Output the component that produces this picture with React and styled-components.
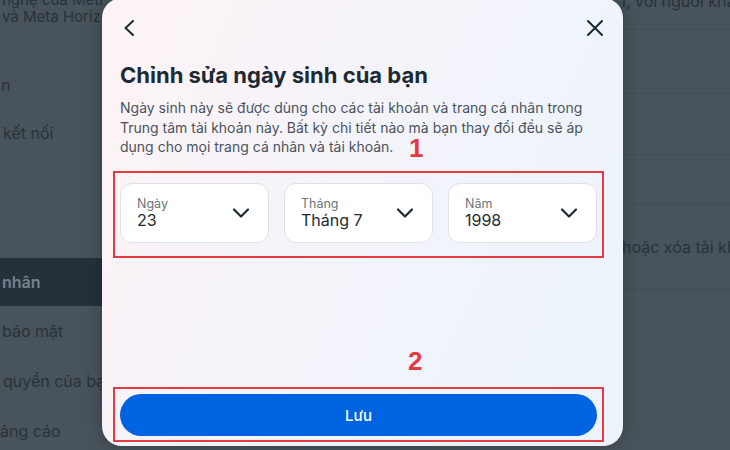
import React from 'react';
import styled, { createGlobalStyle } from 'styled-components';

const Global = createGlobalStyle`
  html, body { margin: 0; padding: 0; }
  body {
    width: 730px;
    height: 450px;
    overflow: hidden;
    font-family: Inter, "Noto Sans", sans-serif;
  }
`;

const Page = styled.div`
  position: relative;
  width: 730px;
  height: 450px;
  overflow: hidden;
  background: #48535b;
  display: grid;
  grid-template-columns: 102px 521px 1fr;
`;

const Sidebar = styled.div`
  display: flex;
  flex-direction: column;
  overflow: hidden;
  white-space: nowrap;
  color: #27323a;
  font-size: 16px;
`;

const IntroText = styled.div`
  margin-top: -9px;
  padding-left: 2px;
  font-size: 15px;
  line-height: 17px;
`;

const NavGroup = styled.div`
  display: flex;
  flex-direction: column;
  margin-top: ${p => p.$top}px;
`;

const NavItem = styled.div`
  height: ${p => p.$h}px;
  display: flex;
  align-items: center;
  padding-left: ${p => p.$indent || 2}px;
  background: ${p => (p.$active ? '#24313b' : 'transparent')};
  color: ${p => (p.$active ? '#76828a' : 'inherit')};
  font-weight: ${p => (p.$active ? 600 : 400)};
`;

const Aside = styled.div`
  display: flex;
  flex-direction: column;
  overflow: hidden;
  white-space: nowrap;
  color: #27323a;
  font-size: 16px;
`;

const AsideRow = styled.div`
  height: ${p => p.$h}px;
  flex: none;
  border-bottom: 1px solid #424d55;
  display: flex;
  align-items: ${p => p.$align || 'center'};
`;

const AsideText = styled.span`
  margin-top: ${p => p.$mt || 0}px;
  margin-left: -1px;
`;

const Modal = styled.div`
  position: absolute;
  left: 102px;
  top: -2px;
  width: 521px;
  height: 448px;
  box-sizing: border-box;
  padding: 14px 26px 4px 18px;
  border-radius: 20px;
  background: linear-gradient(115deg, #fdf3f5 0%, #f6f3f9 35%, #eff4fb 70%, #edf3fb 100%);
  box-shadow: 0 0 18px rgba(0, 0, 0, 0.25);
  display: flex;
  flex-direction: column;
  color: #1c2b33;
`;

const Header = styled.div`
  height: 32px;
  display: flex;
  align-items: center;
  justify-content: space-between;
`;

const IconButton = styled.button`
  border: none;
  background: none;
  padding: 0;
  display: flex;
  align-items: center;
  margin: ${p => p.$margin || 0};
  color: #1c2b33;
`;

const Title = styled.h1`
  margin: 17px 0 0;
  font-size: 22px;
  line-height: 28px;
  font-weight: 700;
  color: #1c2b33;
`;

const Description = styled.p`
  margin: 9px 0 0;
  font-size: 14px;
  line-height: 19.5px;
  color: #4a535c;
`;

const Highlight = styled.div`
  border: 2px solid #e53a3f;
  margin: ${p => p.$margin};
  padding: ${p => p.$padding};
`;

const SelectRow = styled.div`
  display: grid;
  grid-template-columns: repeat(3, 1fr);
  gap: 15px;
`;

const SelectBox = styled.div`
  height: 60px;
  box-sizing: border-box;
  border: 1px solid #dde2e8;
  border-radius: 12px;
  background: #fff;
  display: flex;
  align-items: center;
  justify-content: space-between;
  padding: 0 19px 0 16px;
`;

const SelectText = styled.div`
  display: flex;
  flex-direction: column;
`;

const SelectLabel = styled.span`
  font-size: 12.5px;
  line-height: 15px;
  color: #6b737a;
`;

const SelectValue = styled.span`
  font-size: 16px;
  line-height: 19px;
  color: #1c2b33;
`;

const Spacer = styled.div`
  flex: 1;
`;

const SaveButton = styled.button`
  width: 100%;
  height: 42px;
  border: none;
  border-radius: 21px;
  background: #0064e0;
  color: #fff;
  font-family: inherit;
  font-size: 15px;
  font-weight: 500;
  cursor: pointer;
`;

const Marker = styled.span`
  position: absolute;
  left: ${p => p.$x}px;
  top: ${p => p.$y}px;
  font-family: "Liberation Sans", Arial, sans-serif;
  font-weight: 700;
  font-size: 26px;
  line-height: 1;
  color: #e53a3f;
`;

const Chevron = () => (
  <svg width="16" height="10" viewBox="0 0 16 10" fill="none">
    <path d="M1 1.5 L8 8.5 L15 1.5" stroke="#1c2b33" strokeWidth="2.2" strokeLinecap="round" strokeLinejoin="round" />
  </svg>
);

const Select = ({ label, value }) => (
  <SelectBox>
    <SelectText>
      <SelectLabel>{label}</SelectLabel>
      <SelectValue>{value}</SelectValue>
    </SelectText>
    <Chevron />
  </SelectBox>
);

export default function App() {
  return (
    <>
      <Global />
      <Page>
        <Sidebar>
          <IntroText>
            nghệ của Meta<br />và Meta Horizon
          </IntroText>
          <NavGroup $top={36}>
            <NavItem $h={48} $indent={1}>n</NavItem>
            <NavItem $h={48} $indent={3}>kết nối</NavItem>
          </NavGroup>
          <NavGroup $top={101}>
            <NavItem $h={48} $active>nhân</NavItem>
            <NavItem $h={50}>bảo mật</NavItem>
            <NavItem $h={50} $indent={3}>quyền của bạn</NavItem>
            <NavItem $h={50} $indent={-2}>ảng cáo</NavItem>
          </NavGroup>
        </Sidebar>
        <div />
        <Aside>
          <AsideRow $h={29} $align="flex-start">
            <AsideText $mt={-9}>ì, với người khác</AsideText>
          </AsideRow>
          <AsideRow $h={63} />
          <AsideRow $h={60} />
          <AsideRow $h={48} />
          <AsideRow $h={85}>
            <AsideText>hoặc xóa tài khoản</AsideText>
          </AsideRow>
        </Aside>

        <Modal>
          <Header>
            <IconButton $margin="0 0 0 3px" aria-label="Quay lại">
              <svg width="12" height="16" viewBox="0 0 12 16" fill="none">
                <path d="M10 1 L2.5 8 L10 15" stroke="#1c2b33" strokeWidth="2" strokeLinecap="round" strokeLinejoin="round" />
              </svg>
            </IconButton>
            <IconButton $margin="0 -7px 0 0" aria-label="Đóng">
              <svg width="18" height="18" viewBox="0 0 18 18" fill="none">
                <path d="M2 2 L16 16 M16 2 L2 16" stroke="#1c2b33" strokeWidth="2" strokeLinecap="round" />
              </svg>
            </IconButton>
          </Header>
          <Title>Chỉnh sửa ngày sinh của bạn</Title>
          <Description>
            Ngày sinh này sẽ được dùng cho các tài khoản và trang cá nhân trong Trung tâm tài khoản này. Bất kỳ chi tiết nào mà bạn thay đổi đều sẽ áp dụng cho mọi trang cá nhân và tài khoản.
          </Description>
          <Highlight $margin="14px -7px 0" $padding="10px 5px 13px">
            <SelectRow>
              <Select label="Ngày" value="23" />
              <Select label="Tháng" value="Tháng 7" />
              <Select label="Năm" value="1998" />
            </SelectRow>
          </Highlight>
          <Spacer />
          <Highlight $margin="0 -7px" $padding="5px 5px 4px">
            <SaveButton>Lưu</SaveButton>
          </Highlight>
          <Marker $x={307} $y={137}>1</Marker>
          <Marker $x={306} $y={350}>2</Marker>
        </Modal>
      </Page>
    </>
  );
}
